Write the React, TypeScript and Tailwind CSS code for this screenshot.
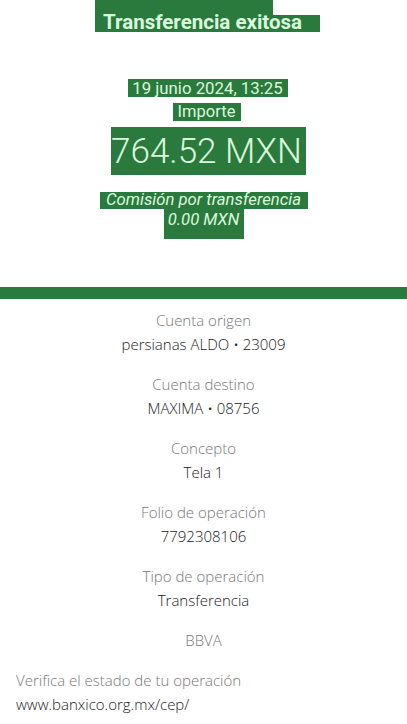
import React from "react";

interface Detail {
  label: string;
  value?: string;
}

const details: Detail[] = [
  { label: "Cuenta origen", value: "persianas ALDO • 23009" },
  { label: "Cuenta destino", value: "MAXIMA • 08756" },
  { label: "Concepto", value: "Tela 1" },
  { label: "Folio de operación", value: "7792308106" },
  { label: "Tipo de operación", value: "Transferencia" },
];

const App: React.FC = () => {
  return (
    <div className="w-[407px] h-[724px] bg-white overflow-hidden font-['Roboto',sans-serif]">
      {/* header */}
      <div className="relative h-[287px]">
        <div className="ml-[95px] w-[178px] h-[15px] bg-[#2a7a3e]" />
        <div className="ml-[95px] w-[225px] h-[17px] bg-[#2a7a3e] flex items-center pl-[8px] whitespace-nowrap">
          <span className="text-[20.5px] leading-none font-bold text-[#dcf8dc] -mt-[2px]">
            Transferencia exitosa
          </span>
        </div>

        <div className="mt-[47px] flex flex-col items-center whitespace-nowrap">
          <div className="h-[18px] w-[160px] bg-[#2a7a3e] flex items-center justify-center translate-x-[4px]">
            <span className="text-[16.8px] leading-none text-[#dcf8dc]">19 junio 2024, 13:25</span>
          </div>
          <div className="mt-[6px] h-[18px] w-[68px] bg-[#2a7a3e] flex items-center justify-center translate-x-[3px]">
            <span className="text-[16.5px] leading-none text-[#dcf8dc]">Importe</span>
          </div>
          <div className="mt-[6px] h-[48px] w-[195px] bg-[#2a7a3e] flex items-center justify-center translate-x-[5px]">
            <span className="text-[35px] leading-none font-light text-[#dcf8dc] -ml-[4px]">764.52 MXN</span>
          </div>
          <div className="mt-[17px] h-[17px] w-[208px] bg-[#2a7a3e] flex items-center justify-center">
            <span className="text-[16.7px] leading-none italic text-[#dcf8dc]">Comisión por transferencia</span>
          </div>
          <div className="h-[30px] w-[80px] bg-[#2a7a3e] flex items-start justify-center pt-[3px]">
            <span className="text-[16.7px] leading-none italic text-[#dcf8dc]">0.00 MXN</span>
          </div>
        </div>
      </div>

      <div className="h-[12px] bg-[#2a7a3e]" />

      {/* details */}
      <div className="pt-[11px] flex flex-col items-center font-['Open_Sans',sans-serif]">
        {details.map((d) => (
          <div key={d.label} className="h-[64px] flex flex-col items-center">
            <span className="text-[15px] leading-[20px] font-light text-[#777]">{d.label}</span>
            <span className="mt-[4px] text-[15px] leading-[20px] font-light text-[#1a1a1a]">{d.value}</span>
          </div>
        ))}
        <span className="text-[15px] leading-[20px] font-light text-[#777]">BBVA</span>
      </div>

      <div className="mt-[20px] px-[16px] font-['Open_Sans',sans-serif]">
        <p className="text-[15px] leading-[20px] font-light text-[#777]">
          Verifica el estado de tu operación
        </p>
        <p className="mt-[4px] text-[15px] leading-[20px] font-light text-[#1a1a1a]">www.banxico.org.mx/cep/</p>
      </div>
    </div>
  );
};

export default App;
